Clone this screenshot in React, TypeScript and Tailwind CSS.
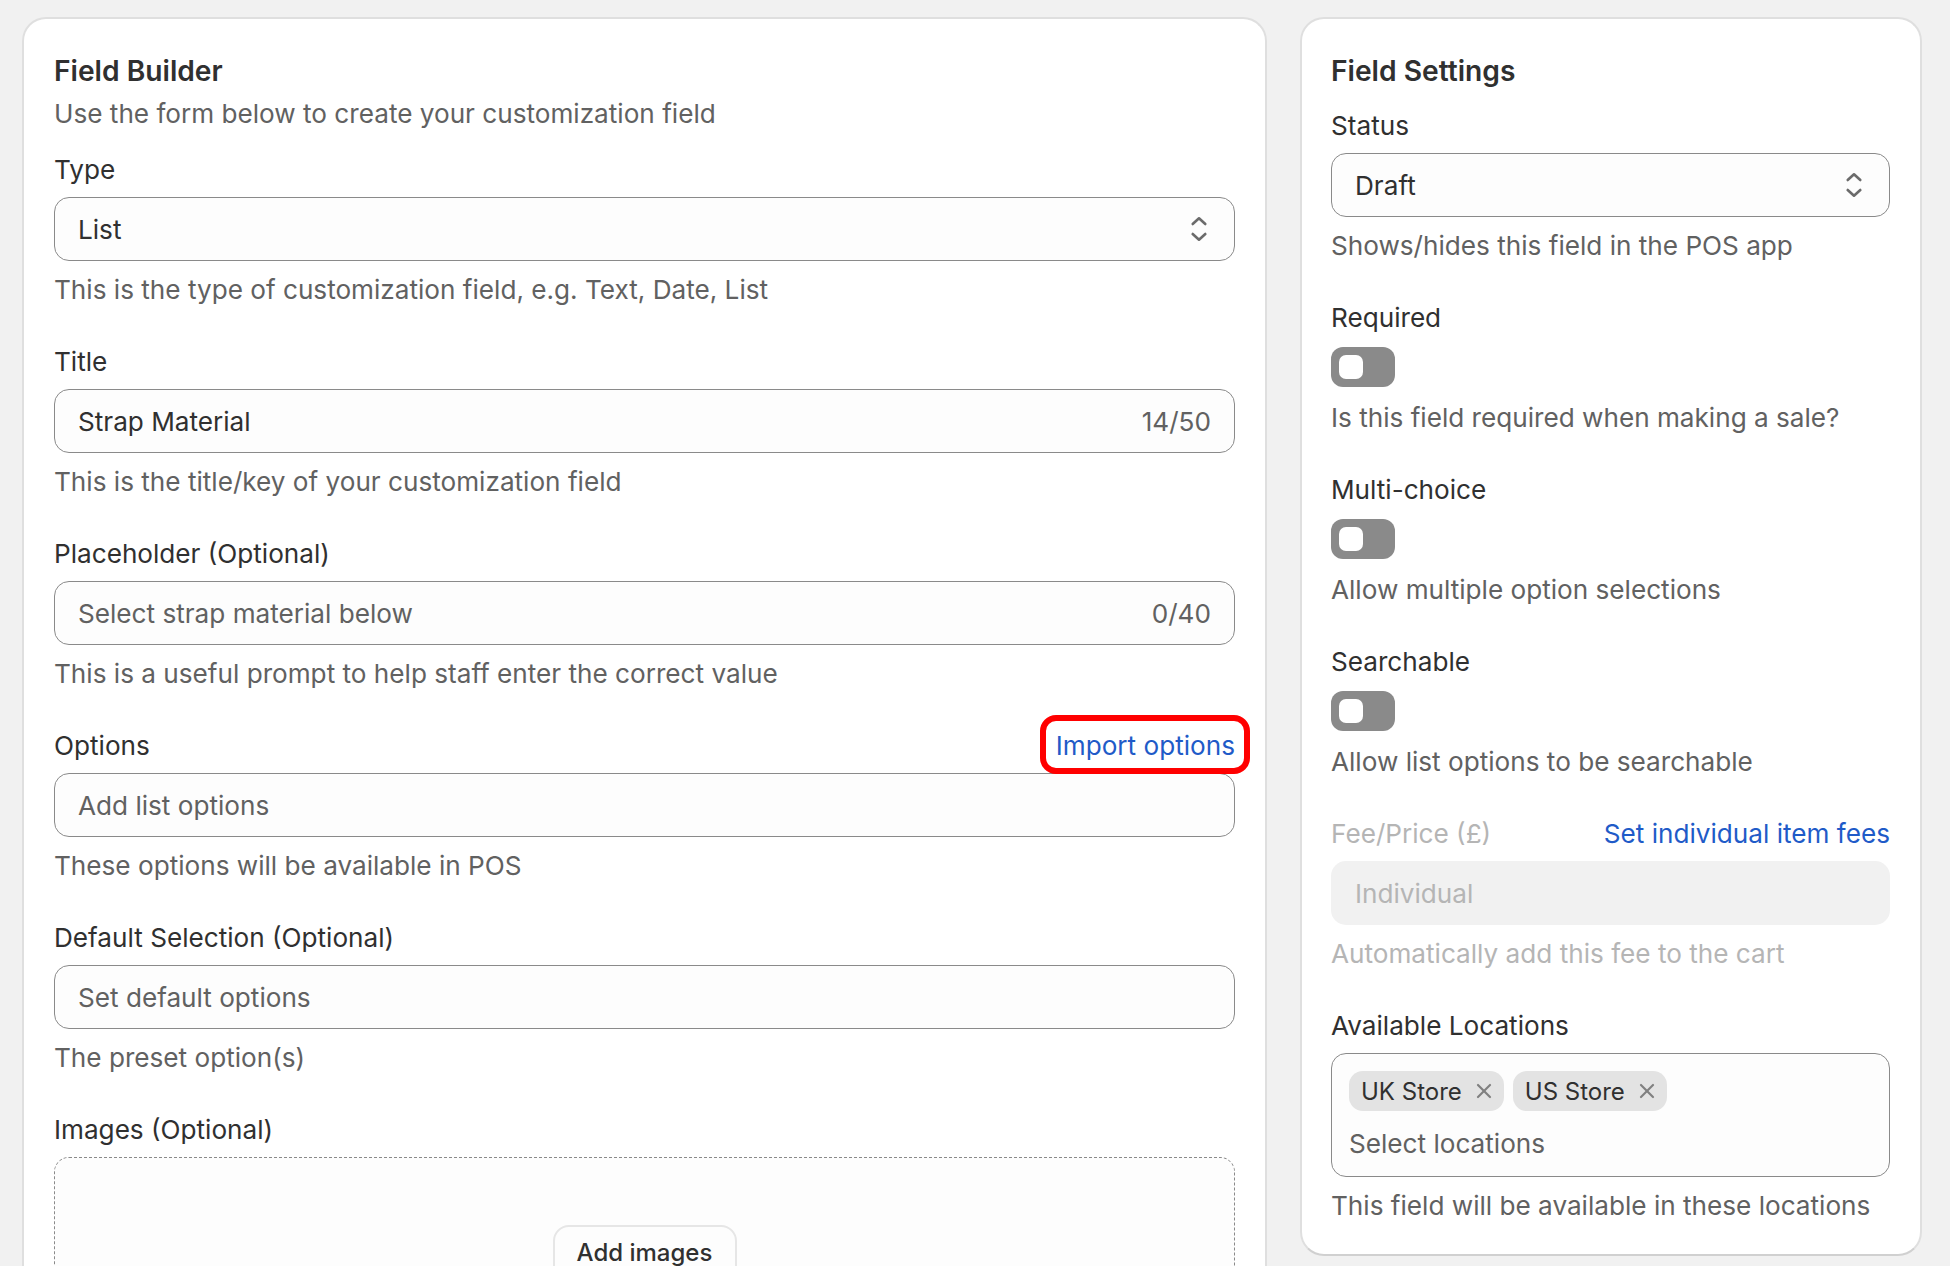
import { X } from 'lucide-react';

const SelectArrows = () => (
  <svg width="24" height="26" viewBox="0 0 24 26" fill="none" stroke="#6b6b6b" strokeWidth="2.6" strokeLinecap="round" strokeLinejoin="round" className="shrink-0">
    <path d="M5.7 8 12 2.3 18.3 8" />
    <path d="M5.7 18 12 23.7 18.3 18" />
  </svg>
);

const Label = ({ children, className = '' }: { children: React.ReactNode; className?: string }) => (
  <div className={`h-8 leading-8 text-[#303030] ${className}`}>{children}</div>
);

const Help = ({ children, muted, gap = 'mt-[13px]' }: { children: React.ReactNode; muted?: boolean; gap?: string }) => (
  <div className={`${gap} h-8 leading-8 ${muted ? 'text-[#b5b5b5]' : 'text-[#616161]'}`}>{children}</div>
);

const Box = ({ children, disabled }: { children: React.ReactNode; disabled?: boolean }) => (
  <div
    className={`mt-[11px] flex h-16 items-center justify-between rounded-[15px] px-[23px] [&>span]:pt-[2px] ${
      disabled ? 'bg-[#f1f1f1] text-[#b5b5b5]' : 'border border-[#8a8a8a] bg-[#fdfdfd]'
    }`}
  >
    {children}
  </div>
);

const Field = ({ label, value, placeholder, count, help }: { label: string; value?: string; placeholder?: string; count?: string; help: string }) => (
  <div className="mt-10">
    <Label>{label}</Label>
    <Box>
      <span className={value ? 'text-[#303030]' : 'text-[#616161]'}>{value ?? placeholder}</span>
      {count && <span className="text-[#616161]">{count}</span>}
    </Box>
    <Help>{help}</Help>
  </div>
);

const Toggle = () => (
  <div className="mt-[13px] flex h-10 w-16 items-center rounded-[12px] bg-[#8a8a8a] pl-2">
    <div className="h-6 w-6 rounded-[7px] bg-white" />
  </div>
);

const ToggleField = ({ label, help }: { label: string; help: string }) => (
  <div className="mt-10">
    <Label>{label}</Label>
    <Toggle />
    <Help gap="mt-[15px]">{help}</Help>
  </div>
);

const Tag = ({ name }: { name: string }) => (
  <div className="flex h-10 items-center gap-[10px] rounded-[14px] bg-[#e3e3e3] pl-3 pr-2 text-[24px] text-[#303030]">
    <span className="pt-[2px]">{name}</span>
    <X size={24} strokeWidth={2.2} className="text-[#808080]" />
  </div>
);

const cardClass =
  'rounded-[24px] border-2 border-[#dfdfdf] border-b-[#d0d0d0] bg-white';

export default function App() {
  return (
    <div className="flex h-[1266px] w-[1950px] items-start gap-[33px] overflow-hidden bg-[#f1f1f1] pl-[22px] pt-[17px] text-[26.15px] font-['Inter',sans-serif] text-[#303030]">
      <div className={`${cardClass} h-[1400px] w-[1245px] shrink-0 px-[30px] pt-[34px]`}>
        <h2 className="h-9 text-[28.2px] font-semibold leading-9">Field Builder</h2>
        <p className="mt-[9px] h-8 leading-8 text-[#616161]">Use the form below to create your customization field</p>

        <div className="mt-6">
          <Label>Type</Label>
          <Box>
            <span>List</span>
            <SelectArrows />
          </Box>
          <Help>This is the type of customization field, e.g. Text, Date, List</Help>
        </div>

        <Field label="Title" value="Strap Material" count="14/50" help="This is the title/key of your customization field" />
        <Field label="Placeholder (Optional)" placeholder="Select strap material below" count="0/40" help="This is a useful prompt to help staff enter the correct value" />

        <div className="mt-10">
          <div className="relative flex h-8 items-center justify-between leading-8">
            <span>Options</span>
            <span className="text-[#1f5bc8]">Import options</span>
            <div className="absolute -right-[15px] -top-[15px] z-10 h-[59px] w-[210px] rounded-[16px] border-[6px] border-[#ff0000]" />
          </div>
          <Box>
            <span className="text-[#616161]">Add list options</span>
          </Box>
          <Help>These options will be available in POS</Help>
        </div>

        <Field label="Default Selection (Optional)" placeholder="Set default options" help="The preset option(s)" />

        <div className="mt-10">
          <Label>Images (Optional)</Label>
          <div className="mt-[11px] flex h-[230px] justify-center rounded-[15px] border border-dashed border-[#8a8a8a] bg-[#fdfdfd] pt-[67px]">
            <div className="flex h-14 w-[184px] items-center justify-center rounded-[16px] border-2 border-[#e6e6e6] bg-[#fdfdfd] text-[24px] font-medium">
              Add images
            </div>
          </div>
        </div>
      </div>

      <div className={`${cardClass} h-[1239px] w-[622px] shrink-0 pl-[29px] pr-[30px] pt-[34px]`}>
        <h2 className="h-9 text-[28.2px] font-semibold leading-9">Field Settings</h2>

        <div className="mt-[21px]">
          <Label>Status</Label>
          <Box>
            <span>Draft</span>
            <SelectArrows />
          </Box>
          <Help>Shows/hides this field in the POS app</Help>
        </div>

        <ToggleField label="Required" help="Is this field required when making a sale?" />
        <ToggleField label="Multi-choice" help="Allow multiple option selections" />
        <ToggleField label="Searchable" help="Allow list options to be searchable" />

        <div className="mt-10">
          <div className="flex h-8 items-center justify-between leading-8">
            <span className="text-[#b5b5b5]">Fee/Price (£)</span>
            <span className="text-[#1f5bc8]">Set individual item fees</span>
          </div>
          <Box disabled>
            <span className="pl-px">Individual</span>
          </Box>
          <Help muted>Automatically add this fee to the cart</Help>
        </div>

        <div className="mt-10">
          <Label>Available Locations</Label>
          <div className="mt-[11px] h-[124px] rounded-[15px] border border-[#8a8a8a] bg-[#fdfdfd] px-[17px] pt-[17px]">
            <div className="flex gap-[9px]">
              <Tag name="UK Store" />
              <Tag name="US Store" />
            </div>
            <div className="mt-[17px] h-8 leading-8 text-[#616161]">Select locations</div>
          </div>
          <Help>This field will be available in these locations</Help>
        </div>
      </div>
    </div>
  );
}
